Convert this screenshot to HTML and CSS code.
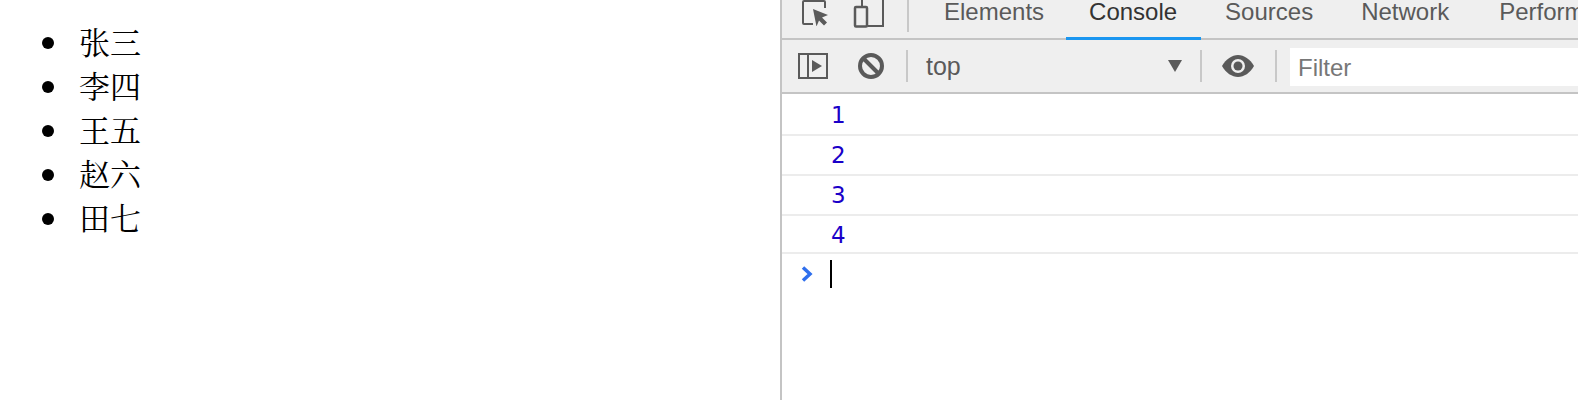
FILE: index.html
```html
<!DOCTYPE HTML>
<html lang="en">
    <head>
        <meta charset="utf-8">
        <title>console</title>
        <link rel="stylesheet" href="styles.css">
    </head>
    <body>
        <div class="page">
            <ul class="names">
                <li>张三</li>
                <li>李四</li>
                <li>王五</li>
                <li>赵六</li>
                <li>田七</li>
            </ul>
        </div>
        <div class="devtools">
            <div class="tabbar">
                <svg class="ico_inspect" width="26" height="26" viewBox="0 0 26 26">
                    <path d="M11 24H2a1 1 0 0 1-1-1V2a1 1 0 0 1 1-1h20a1 1 0 0 1 1 1v6" fill="none" stroke="#5a5a5a" stroke-width="2"/>
                    <path d="M11 9l15 6-6 2.500 5 5-3 3-5-5-2.500 6z" fill="#5a5a5a"/>
                </svg>
                <svg class="ico_device" width="32" height="28" viewBox="0 0 32 28">
                    <path d="M9 0v7M30 0v26H15" fill="none" stroke="#5a5a5a" stroke-width="2"/>
                    <rect x="2" y="7" width="12" height="19.500" rx="1" fill="none" stroke="#5a5a5a" stroke-width="2.500"/>
                </svg>
                <span class="sep tab_sep"></span>
                <span class="tab tab_elements">Elements</span>
                <span class="tab tab_on">Console</span>
                <span class="tab">Sources</span>
                <span class="tab tab_network">Network</span>
                <span class="tab">Performance</span>
            </div>
            <div class="toolbar">
                <svg class="ico_sidebar" width="30" height="26" viewBox="0 0 30 26">
                    <rect x="1" y="1" width="28" height="24" fill="none" stroke="#5a5a5a" stroke-width="2"/>
                    <path d="M10 1v24" stroke="#5a5a5a" stroke-width="2"/>
                    <path d="M14 7l10 6-10 6z" fill="#5a5a5a"/>
                </svg>
                <svg class="ico_clear" width="26" height="26" viewBox="0 0 26 26">
                    <circle cx="13" cy="13" r="11" fill="none" stroke="#5a5a5a" stroke-width="4"/>
                    <path d="M6 6l14 14" stroke="#5a5a5a" stroke-width="4"/>
                </svg>
                <span class="sep ctx_sep"></span>
                <span class="context">top</span>
                <span class="arrow"></span>
                <span class="sep"></span>
                <svg class="ico_eye" width="32" height="22" viewBox="0 0 32 22">
                    <path d="M0 11C4 4 10 0 16 0s12 4 16 11c-4 7-10 11-16 11S4 18 0 11z" fill="#5a5a5a"/>
                    <circle cx="16" cy="11" r="7" fill="#efefef"/>
                    <circle cx="16" cy="11" r="4.500" fill="#5a5a5a"/>
                </svg>
                <span class="sep"></span>
                <div class="filter">Filter</div>
            </div>
            <div class="output">
                <div class="row row_first">1</div>
                <div class="row">2</div>
                <div class="row">3</div>
                <div class="row row_last">4</div>
                <div class="prompt">
                    <svg width="12" height="16" viewBox="0 0 12 16">
                        <path d="M2 1.500l7 6.500-7 6.500" fill="none" stroke="#2f6fed" stroke-width="3.500"/>
                    </svg>
                    <span class="caret"></span>
                </div>
            </div>
        </div>
    </body>
</html>
```

FILE: styles.css
```css
*{margin:0;padding:0;box-sizing:border-box;}
html,body{height:100%;overflow:hidden;}
body{display:flex;background-color:#fff;}
.page{
    width:780px;
    flex:none;
    padding-top:19px;
}
ul.names{
    padding-left:42px;
    list-style:none;
    font-family:"Noto Serif CJK SC","Noto Sans CJK SC",serif;
    font-size:31px;
    line-height:44px;
    color:#000;
}
ul.names li{
    display:flex;
    align-items:center;
}
ul.names li::before{
    content:"";
    flex:none;
    width:12px;
    height:12px;
    margin:4px 25px 0 0;
    border-radius:50%;
    background-color:#000;
}
.devtools{
    flex:1;
    min-width:0;
    border-left:2px solid #c4c4c4;
    font-family:"Liberation Sans",Arial,sans-serif;
}
.tabbar{
    display:flex;
    align-items:flex-start;
    height:40px;
    padding-left:20px;
    background-color:#efefef;
    box-shadow:inset 0 -2px 0 #c4c4c4;
    white-space:nowrap;
    overflow:hidden;
}
.ico_inspect{flex:none;}
.ico_device{flex:none;margin-left:25px;}
.tab_sep{margin:0 11px 0 22px;height:28px;}
.tab{
    height:40px;
    padding:2px 24px 0;
    font-size:24px;
    line-height:20px;
    color:#5a5a5a;
}
.tab_elements{padding-right:22px;}
.tab_network{padding-right:26px;}
.tab_on{
    padding-left:23px;
    color:#333;
    border-bottom:3px solid #1a96f0;
}
.sep{
    display:block;
    flex:none;
    width:2px;
    height:32px;
    background-color:#c8c8c8;
}
.toolbar{
    display:flex;
    align-items:center;
    height:54px;
    padding-left:16px;
    background-color:#efefef;
    border-bottom:2px solid #c4c4c4;
}
.ico_sidebar{flex:none;}
.ico_clear{flex:none;margin-left:30px;}
.ctx_sep{margin-left:22px;}
.context{
    width:256px;
    padding-left:18px;
    font-size:25px;
    color:#5a5a5a;
}
.arrow{
    flex:none;
    width:0;
    height:0;
    margin:0 18px 0 4px;
    border-left:7px solid transparent;
    border-right:7px solid transparent;
    border-top:12px solid #5a5a5a;
}
.ico_eye{flex:none;margin:0 21px 0 20px;}
.filter{
    flex:1;
    height:38px;
    margin:2px 0 0 13px;
    padding-left:8px;
    font-size:24px;
    line-height:40px;
    color:#777;
    background-color:#fff;
}
.row{
    height:40px;
    padding-left:49px;
    font-family:"DejaVu Sans",sans-serif;
    font-size:23px;
    line-height:38px;
    color:#1a00c8;
    border-bottom:2px solid #ececec;
}
.row_first{height:42px;padding-top:2px;}
.row_last{height:38px;line-height:38px;}
.prompt{
    display:flex;
    align-items:center;
    height:40px;
    padding-left:19px;
}
.caret{
    display:block;
    width:2px;
    height:28px;
    margin-left:17px;
    background-color:#000;
}
```
